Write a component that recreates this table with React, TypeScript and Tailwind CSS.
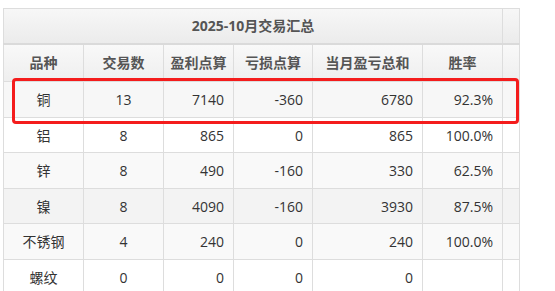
import React from "react";

const rows = [
  { name: "铜", count: "13", win: "7140", loss: "-360", total: "6780", rate: "92.3%", bg: "bg-[#f7f7f7]", h: "h-[36px]" },
  { name: "铝", count: "8", win: "865", loss: "0", total: "865", rate: "100.0%", bg: "bg-white", h: "h-[35px]" },
  { name: "锌", count: "8", win: "490", loss: "-160", total: "330", rate: "62.5%", bg: "bg-[#f9f9f9]", h: "h-[36px]" },
  { name: "镍", count: "8", win: "4090", loss: "-160", total: "3930", rate: "87.5%", bg: "bg-[#f3f3f3]", h: "h-[35px]" },
  { name: "不锈钢", count: "4", win: "240", loss: "0", total: "240", rate: "100.0%", bg: "bg-[#f9f9f9]", h: "h-[36px]" },
  { name: "螺纹", count: "0", win: "0", loss: "0", total: "0", rate: "", bg: "bg-white", h: "h-[35px]" },
];

const headers = ["品种", "交易数", "盈利点算", "亏损点算", "当月盈亏总和", "胜率"];

export default function App() {
  return (
    <div className="relative w-[555px] h-[291px] overflow-hidden bg-white pl-[3px] pt-[8px] font-['Open_Sans','Noto_Sans_CJK_SC',sans-serif] text-[14px] text-[#333]">
      <table className="table-fixed border-collapse w-[516px]">
        <colgroup>
          <col className="w-[80px]" />
          <col className="w-[80px]" />
          <col className="w-[70px]" />
          <col className="w-[79px]" />
          <col className="w-[110px]" />
          <col className="w-[80px]" />
          <col className="w-[17px]" />
        </colgroup>
        <thead>
          <tr className="h-[35px] bg-gradient-to-b from-[#f7f7f7] to-[#ebebeb]">
            <th colSpan={6} className="border border-[#dddddd] border-b-2 border-b-[#dadada] text-center font-bold text-[#555]">
              2025-10月交易汇总
            </th>
            <th className="border border-[#dddddd] border-b-2 border-b-[#dadada]" />
          </tr>
          <tr className="h-[38px] bg-gradient-to-b from-[#f9f9f9] to-[#eeeeee]">
            {headers.map((h) => (
              <th key={h} className="border border-[#dddddd] text-center font-bold text-[#555]">
                {h}
              </th>
            ))}
            <th className="border border-[#dddddd]" />
          </tr>
        </thead>
        <tbody>
          {rows.map((r) => (
            <tr key={r.name} className={`${r.bg} ${r.h}`}>
              <td className="border border-[#dddddd] text-center">{r.name}</td>
              <td className="border border-[#dddddd] text-center">{r.count}</td>
              <td className="border border-[#dddddd] text-right pr-[9px]">{r.win}</td>
              <td className="border border-[#dddddd] text-right pr-[9px]">{r.loss}</td>
              <td className="border border-[#dddddd] text-right pr-[9px]">{r.total}</td>
              <td className="border border-[#dddddd] text-right pr-[9px]">{r.rate}</td>
              <td className="border border-[#dddddd]" />
            </tr>
          ))}
        </tbody>
      </table>

      {/* red highlight around the copper row */}
      <div className="absolute left-[12px] top-[78px] w-[507px] h-[46px] rounded-[4px] border-[3px] border-[#f41c1c]" />
    </div>
  );
}
